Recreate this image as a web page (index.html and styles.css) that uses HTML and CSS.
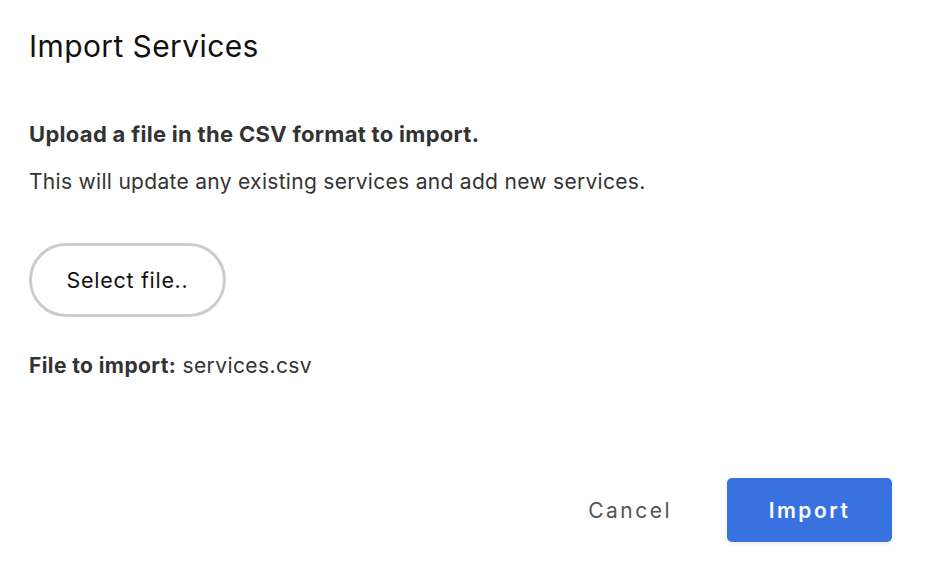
FILE: index.html
```html
<!DOCTYPE html>
<html lang="en">
<head>
    <meta charset="UTF-8">
    <title>Import Services</title>
    <link rel="stylesheet" href="styles.css">
</head>
<body>
    <div class="dialog">
        <h2 class="dialog-title">Import Services</h2>

        <div class="dialog-body">
            <p class="lead">Upload a file in the CSV format to import.</p>
            <p class="note">This will update any existing services and add new services.</p>

            <button class="btn-select">Select file..</button>

            <p class="file-name"><strong>File to import:</strong> services.csv</p>
        </div>

        <div class="dialog-actions">
            <button class="btn-cancel">Cancel</button>
            <button class="btn-import">Import</button>
        </div>
    </div>
</body>
</html>
```

FILE: styles.css
```css
* {
    margin: 0;
    padding: 0;
    box-sizing: border-box;
    font-family: Inter, 'Noto Sans', sans-serif;
}
body {
    background: #fff;
    color: #333;
}
.dialog {
    width: 934px;
    height: 562px;
    padding: 28px 42px 20px 29px;
    display: flex;
    flex-direction: column;
}
.dialog-title {
    font-size: 30px;
    font-weight: 400;
    line-height: 36px;
    letter-spacing: 0.4px;
    color: #111;
}
.dialog-body {
    margin-top: 58px;
    flex: 1;
}
.lead {
    font-size: 22px;
    font-weight: 700;
    line-height: 24px;
    letter-spacing: 0.3px;
}
.note {
    font-size: 21px;
    line-height: 24px;
    letter-spacing: 0.3px;
    margin-top: 24px;
}
.btn-select {
    display: block;
    width: 197px;
    height: 74px;
    margin-top: 49px;
    border: 3px solid #ccc;
    border-radius: 37px;
    background: #fff;
    color: #111;
    font-size: 21.5px;
    letter-spacing: 0.7px;
    cursor: pointer;
}
.file-name {
    font-size: 21px;
    line-height: 24px;
    letter-spacing: 0.4px;
    margin-top: 37px;
}
.dialog-actions {
    display: flex;
    justify-content: flex-end;
    align-items: center;
    gap: 55px;
}
.dialog-actions button {
    font-size: 21px;
    letter-spacing: 2.5px;
    cursor: pointer;
    border: none;
}
.btn-cancel {
    background: none;
    color: #555;
}
.btn-import {
    width: 165px;
    height: 64px;
    background: #3872e0;
    color: #fff;
    font-weight: 600;
    border-radius: 5px;
    box-shadow: 0 2px 4px rgba(0, 0, 0, 0.08);
}
```
